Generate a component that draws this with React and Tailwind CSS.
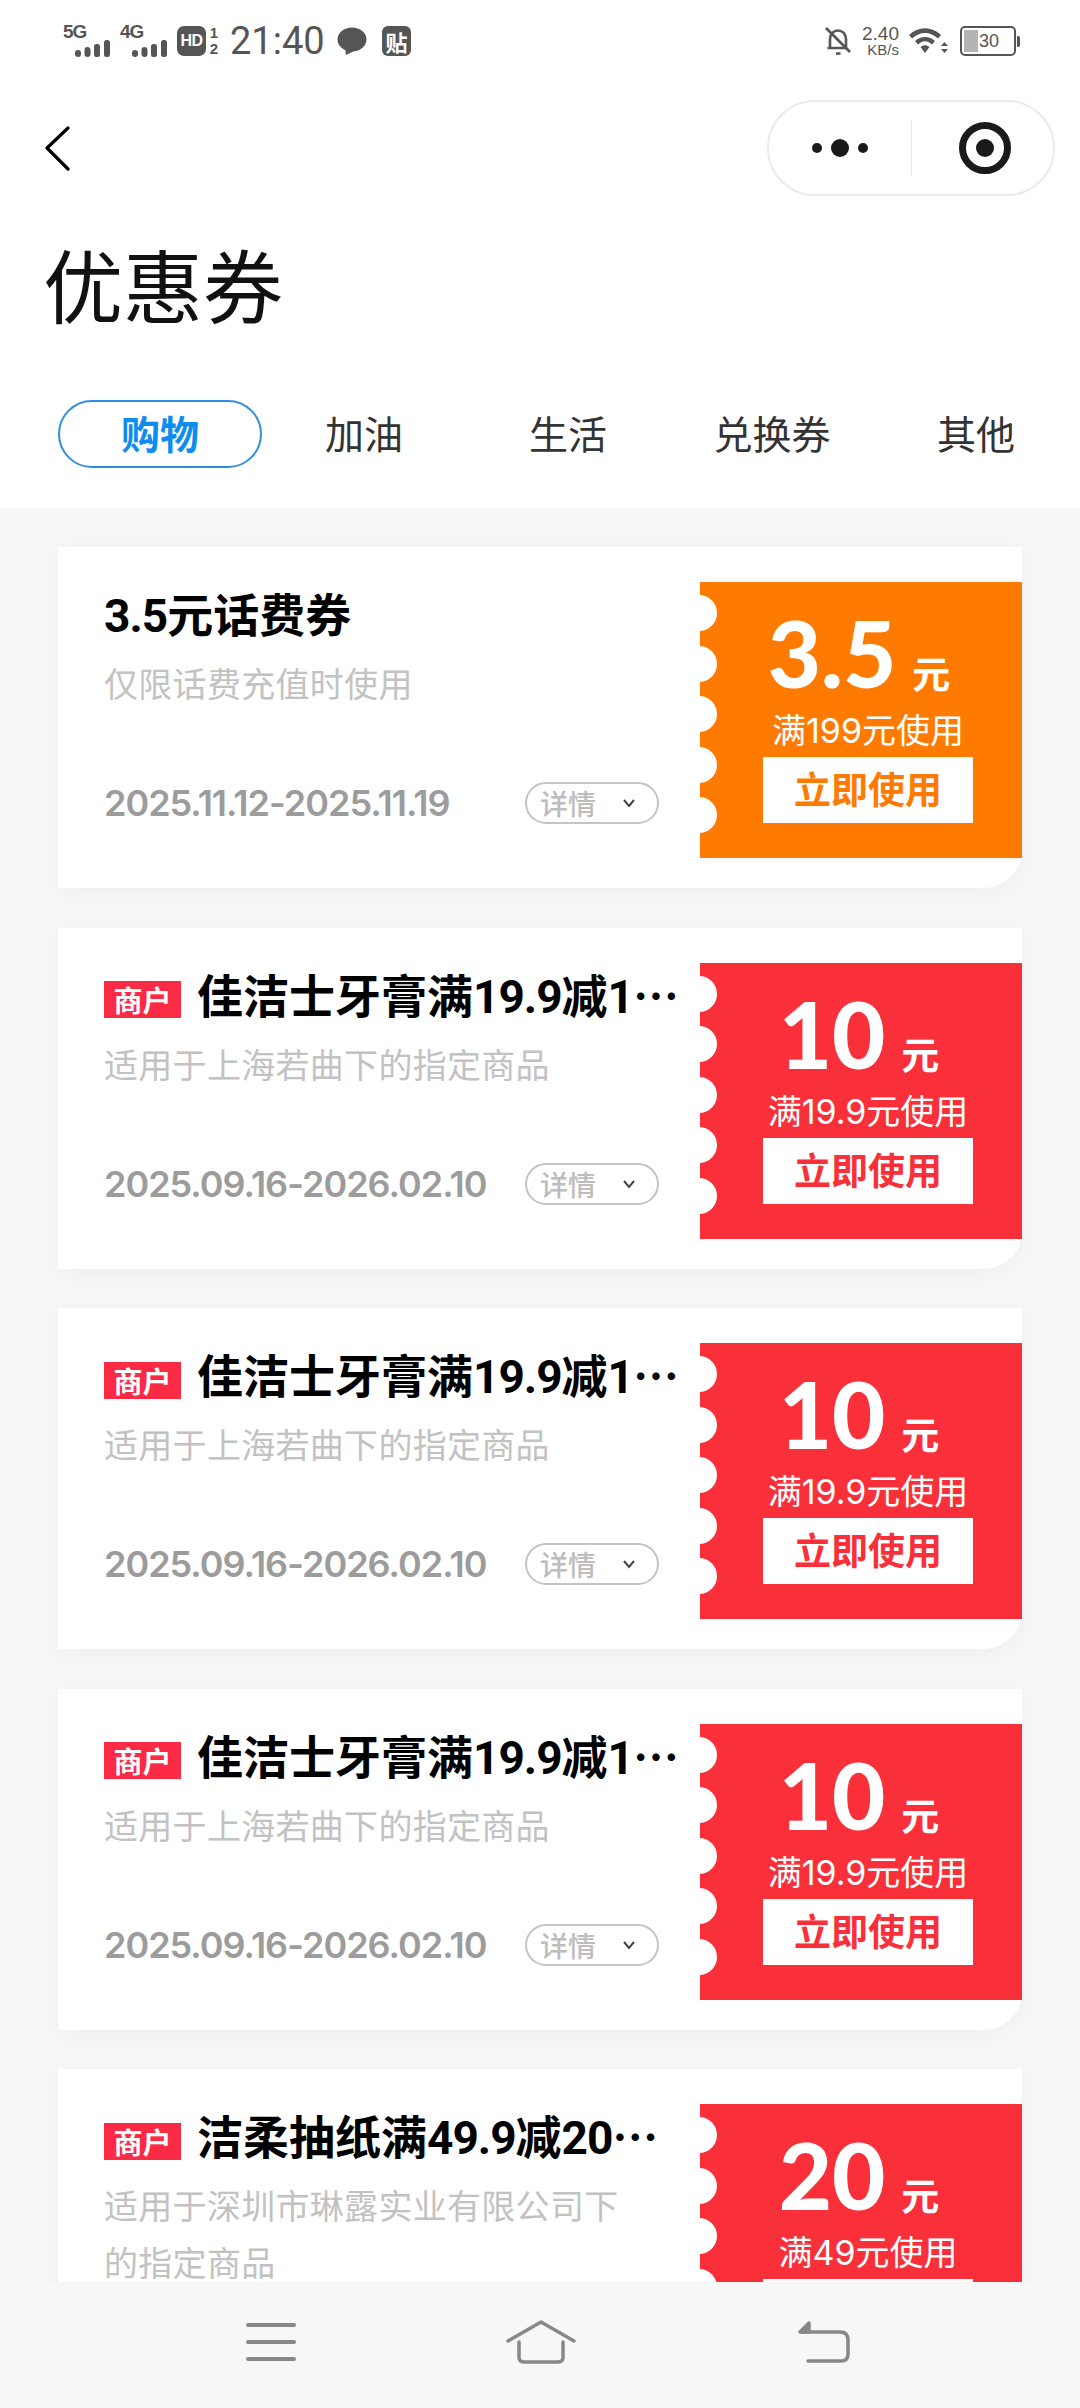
const CJK = "font-['Noto_Sans_CJK_SC',sans-serif]";
const LATIN_CJK = "font-['Inter','Noto_Sans_CJK_SC',sans-serif]";

const coupons = [
  {
    tag: false,
    title: "3.5元话费券",
    desc: "仅限话费充值时使用",
    date: "2025.11.12-2025.11.19",
    amount: "3.5",
    rule: "满199元使用",
    orange: true,
  },
  {
    tag: true,
    title: "佳洁士牙膏满19.9减10元优惠券",
    desc: "适用于上海若曲下的指定商品",
    date: "2025.09.16-2026.02.10",
    amount: "10",
    rule: "满19.9元使用",
  },
  {
    tag: true,
    title: "佳洁士牙膏满19.9减10元优惠券",
    desc: "适用于上海若曲下的指定商品",
    date: "2025.09.16-2026.02.10",
    amount: "10",
    rule: "满19.9元使用",
  },
  {
    tag: true,
    title: "佳洁士牙膏满19.9减10元优惠券",
    desc: "适用于上海若曲下的指定商品",
    date: "2025.09.16-2026.02.10",
    amount: "10",
    rule: "满19.9元使用",
  },
  {
    tag: true,
    title: "洁柔抽纸满49.9减20元优惠券",
    desc: "适用于深圳市琳露实业有限公司下的指定商品",
    date: "2025.09.16-2026.02.10",
    amount: "20",
    rule: "满49元使用",
  },
];

const tabs = ["购物", "加油", "生活", "兑换券", "其他"];

function Signal({ label }) {
  return (
    <div className="relative w-[47px] h-[32px]">
      <span className="absolute left-0 top-[-3px] text-[19px] leading-[20px] tracking-[-1px] font-bold font-['Liberation_Sans',sans-serif]">{label}</span>
      <svg className="absolute left-[12px] bottom-0" width="35" height="17" viewBox="0 0 35 17" fill="#555">
        <rect x="0" y="10" width="6" height="7" rx="3" />
        <rect x="9.500" y="7" width="6" height="10" rx="3" />
        <rect x="19" y="4" width="6" height="13" rx="2.500" />
        <rect x="29" y="0" width="6" height="17" rx="2.500" />
      </svg>
    </div>
  );
}

function StatusBar() {
  return (
    <div className="flex items-center h-[32px] mt-[25px] pl-[63px] pr-[60px] text-[#555]">
      <Signal label="5G" />
      <div className="ml-[10px]">
        <Signal label="4G" />
      </div>
      <div className="ml-[10px] flex items-center justify-center w-[29px] h-[30px] rounded-[7px] bg-[#555] text-white text-[16px] tracking-[-0.500px] font-bold font-['Liberation_Sans',sans-serif]">
        HD
      </div>
      <div className="ml-[3px] flex flex-col items-center w-[10px] text-[15px] leading-[16px] font-bold font-['Liberation_Sans',sans-serif]">
        <span>1</span>
        <span>2</span>
      </div>
      <span className="ml-[11px] w-[93px] text-[38px] leading-[32px] font-['Roboto',sans-serif]">21:40</span>
      <svg className="ml-[14px]" width="30" height="29" viewBox="0 0 30 29" fill="#555">
        <ellipse cx="15" cy="12.500" rx="14.500" ry="12" />
        <path d="M8 21 L9 28 L17 24 Z" />
      </svg>
      <div className={`ml-[15px] flex items-center justify-center w-[29px] h-[30px] rounded-[6px] bg-[#555] text-white text-[22px] leading-none font-bold ${CJK}`}>
        贴
      </div>
      <svg className="ml-auto" width="27" height="30" viewBox="0 0 27 30" fill="none" stroke="#555" strokeWidth="2.600">
        <path d="M5 22 V13 C5 8 8.500 4.500 13 4.500 C17.500 4.500 21 8 21 13 V22 H2.500" />
        <path d="M1 2 L25 26" />
        <path d="M11 27.500 H15.500" />
      </svg>
      <div className="ml-[7px] flex flex-col items-end w-[40px] font-['Liberation_Sans',sans-serif]">
        <span className="text-[19px] leading-[17px]">2.40</span>
        <span className="text-[15px] leading-[15px]">KB/s</span>
      </div>
      <svg className="ml-[10px]" width="39" height="28" viewBox="0 0 39 28" fill="#555">
        <path d="M0 8 C9 -1 23 -1 32 8 L29 11.500 C21.500 4 10.500 4 3 11.500 Z" />
        <path d="M6 14 C12 8.500 20 8.500 26 14 L23 17.500 C18.500 13 13.500 13 9 17.500 Z" />
        <path d="M11.500 20 C14.500 17.500 17.500 17.500 20.500 20 L16 26 Z" />
        <path d="M35.500 15 L39 19 H32 Z" />
        <path d="M32 22 H39 L35.500 26 Z" />
      </svg>
      <div className="ml-[12px] flex items-center">
        <div className="flex items-center w-[56px] h-[30px] rounded-[5px] border-[2.500px] border-[#555] p-[2px]">
          <div className="shrink-0 w-[14px] h-full bg-[#b4b4b4]" />
          <span className="ml-[1px] text-[18px] leading-none font-['Liberation_Sans',sans-serif]">30</span>
        </div>
        <div className="ml-[1px] w-[3px] h-[11px] rounded-r-[2px] bg-[#555]" />
      </div>
    </div>
  );
}

function NavBar() {
  return (
    <div className="flex items-center justify-between h-[96px] mt-[43px]">
      <svg className="ml-[43px]" width="28" height="46" viewBox="0 0 28 46" fill="none" stroke="#000" strokeWidth="3.200" strokeLinecap="round" strokeLinejoin="round">
        <path d="M25 3 L4 23 L25 44" />
      </svg>
      <div className="mr-[25px] flex items-center w-[288px] h-[96px] rounded-full border-2 border-[#ebebeb]">
        <div className="flex items-center justify-center w-[142px]">
          <svg width="56" height="20" viewBox="0 0 56 20" fill="#1a1a1a">
            <circle cx="5" cy="10" r="5" />
            <circle cx="28" cy="10" r="9" />
            <circle cx="51" cy="10" r="5" />
          </svg>
        </div>
        <div className="w-px h-[56px] bg-[#e8e8e8]" />
        <div className="flex items-center justify-center flex-1 pl-[5px]">
          <svg width="54" height="54" viewBox="0 0 54 54" fill="none">
            <circle cx="27" cy="27" r="22.500" stroke="#1a1a1a" strokeWidth="7" />
            <circle cx="27" cy="27" r="9" fill="#1a1a1a" />
          </svg>
        </div>
      </div>
    </div>
  );
}

function Scallops() {
  return (
    <div className="absolute left-[-19px] top-[13px] flex flex-col gap-[14.500px]">
      {[0, 1, 2, 3, 4].map((i) => (
        <div key={i} className="w-[36px] h-[36px] rounded-full bg-white" />
      ))}
    </div>
  );
}

// digits sit in Roboto, the ellipsis stays the centred CJK one of the parent
function CouponTitle({ text }) {
  return (
    <span className={`truncate text-[46px] leading-[46px] font-bold text-black ${CJK}`}>
      {text.split(/([0-9.]+)/).map((part, i) =>
        i % 2 === 1 ? (
          <span key={i} className="tracking-[-1px] font-['Roboto',sans-serif]">
            {part}
          </span>
        ) : (
          part
        )
      )}
    </span>
  );
}

function CouponCard({ coupon }) {
  const { tag, title, desc, date, amount, rule, orange } = coupon;
  return (
    <div className="flex shrink-0 h-[341px] bg-white rounded-br-[38px] shadow-[0_4px_24px_rgba(0,0,0,0.04)]">
      <div className="flex flex-col w-[642px] pl-[46px] pr-[19px]">
        <div className="flex items-center h-[46px] mt-[44px]">
          {tag && (
            <span className={`shrink-0 flex items-center justify-center w-[77px] h-[37px] mt-[10px] mr-[16px] bg-[#fb2a45] text-white text-[29px] leading-none font-bold ${CJK}`}>
              商户
            </span>
          )}
          <CouponTitle text={title} />
        </div>
        <p className={`mt-[17px] w-[530px] text-[34px] leading-[57px] tracking-[0.300px] text-[#c2c2c2] ${CJK}`}>{desc}</p>
        <div className="flex items-center mt-auto mb-[64px] h-[42px]">
          <span className="text-[36px] leading-none tracking-[-1px] font-semibold text-[#9c9c9c] font-['Inter',sans-serif]">{date}</span>
          <div className="ml-auto mr-[22px] flex shrink-0 items-center w-[134px] h-[42px] rounded-full border-2 border-[#c4c4c4] pl-[13px]">
            <span className={`text-[28px] leading-none font-medium text-[#bdbdbd] ${CJK}`}>详情</span>
            <svg className="ml-[26px]" width="14" height="10" viewBox="0 0 14 10" fill="none" stroke="#444" strokeWidth="2">
              <path d="M2 2 L7 8 L12 2" />
            </svg>
          </div>
        </div>
      </div>
      <div className={`relative flex flex-col items-center w-[322px] h-[276px] mt-[35px] pl-[14px] ${orange ? "bg-[#ff7a00]" : "bg-[#f92f39]"}`}>
        <Scallops />
        <div className="flex items-baseline h-[110px] ml-[-18px] text-white">
          <span className="text-[92px] leading-[110px] mt-[16px] font-black font-['Lato',sans-serif]">{amount}</span>
          <span className={`ml-[16px] text-[38px] leading-none font-bold ${CJK}`}>元</span>
        </div>
        <span className={`mt-[17px] text-[34px] leading-[44px] text-white ${LATIN_CJK}`}>{rule}</span>
        <div className={`flex items-center justify-center shrink-0 w-[210px] h-[66px] mt-[4px] pb-[3px] bg-white text-[37px] leading-none font-bold ${CJK} ${orange ? "text-[#ff7a00]" : "text-[#f92f39]"}`}>
          立即使用
        </div>
      </div>
    </div>
  );
}

export default function App() {
  return (
    <div className={`flex flex-col w-[1080px] h-[2408px] overflow-hidden bg-[#f7f7f7] ${CJK}`}>
      <div className="shrink-0 h-[508px] bg-white">
        <StatusBar />
        <NavBar />
        <h1 className={`mt-[27px] pl-[43px] text-[80px] leading-[118px] font-normal text-[#111] ${CJK}`}>优惠券</h1>
        <div className="grid grid-cols-[204px_204px_204px_204px_204px] pl-[58px] mt-[59px]">
          {tabs.map((name, i) => (
            <div
              key={name}
              className={`flex items-center justify-center w-[204px] h-[68px] pb-[3px] rounded-full text-[39px] leading-none ${
                i === 0 ? "border-2 border-[#2f8fdd] font-bold text-[#0f8cf0]" : "text-[#333]"
              } ${CJK}`}
            >
              {name}
            </div>
          ))}
        </div>
      </div>
      <div className="flex flex-col flex-1 min-h-0 gap-[39.500px] overflow-hidden pt-[39px] px-[58px]">
        {coupons.map((coupon, i) => (
          <CouponCard key={i} coupon={coupon} />
        ))}
      </div>
      <div className="flex items-center shrink-0 h-[126px] pb-[6px] pl-[246px]">
        <svg width="50" height="38" viewBox="0 0 50 38" fill="#888">
          <rect x="0" y="0" width="50" height="4" rx="2" />
          <rect x="0" y="17" width="50" height="4" rx="2" />
          <rect x="0" y="34" width="50" height="4" rx="2" />
        </svg>
        <svg className="ml-[210px]" width="70" height="44" viewBox="0 0 70 44" fill="none" stroke="#888" strokeWidth="3.500" strokeLinecap="round" strokeLinejoin="round">
          <path d="M2 21 L35 2 L68 21" />
          <path d="M13 22 V37 Q13 42 18 42 H52 Q57 42 57 37 V22" />
        </svg>
        <svg className="ml-[222px]" width="52" height="42" viewBox="0 0 52 42" fill="none" stroke="#888" strokeWidth="3.500" strokeLinecap="round" strokeLinejoin="round">
          <path d="M3 11 H42 Q50 11 50 19 V33 Q50 40 43 40 H10" />
          <path d="M2 11 L11 2 V11 Z" fill="#888" />
        </svg>
      </div>
    </div>
  );
}
